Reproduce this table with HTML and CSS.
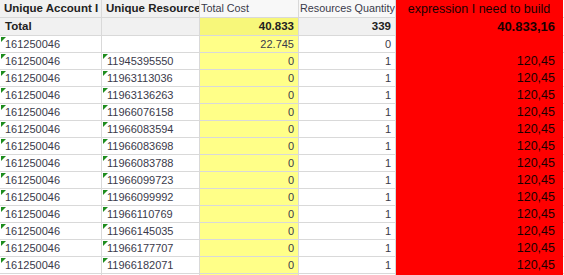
FILE: index.html
```html
<!DOCTYPE html>
<html lang="en">
<head>
    <meta charset="UTF-8">
    <title>Straight Table</title>
    <link rel="stylesheet" href="styles.css">
</head>
<body>
    <div class="sheet">
        <!-- header -->
        <div class="cell head bold">Unique Account I</div>
        <div class="cell head bold">Unique Resource</div>
        <div class="cell head light">Total Cost</div>
        <div class="cell head light">Resources Quantity</div>
        <div class="cell expr expr-head">expression I need to build</div>
        <div class="cell edge"></div>

        <!-- totals -->
        <div class="cell total bold">Total</div>
        <div class="cell total"></div>
        <div class="cell cost total-cost bold num">40.833</div>
        <div class="cell total bold num">339</div>
        <div class="cell expr bold num">40.833,16</div>
        <div class="cell edge"></div>

        <div class="cell flag">161250046</div>
        <div class="cell"></div>
        <div class="cell cost num">22.745</div>
        <div class="cell num">0</div>
        <div class="cell expr num"></div>
        <div class="cell edge"></div>

        <div class="cell flag">161250046</div><div class="cell flag">11945395550</div><div class="cell cost num">0</div><div class="cell num">1</div><div class="cell expr num">120,45</div><div class="cell edge"></div>
        <div class="cell flag">161250046</div><div class="cell flag">11963113036</div><div class="cell cost num">0</div><div class="cell num">1</div><div class="cell expr num">120,45</div><div class="cell edge"></div>
        <div class="cell flag">161250046</div><div class="cell flag">11963136263</div><div class="cell cost num">0</div><div class="cell num">1</div><div class="cell expr num">120,45</div><div class="cell edge"></div>
        <div class="cell flag">161250046</div><div class="cell flag">11966076158</div><div class="cell cost num">0</div><div class="cell num">1</div><div class="cell expr num">120,45</div><div class="cell edge"></div>
        <div class="cell flag">161250046</div><div class="cell flag">11966083594</div><div class="cell cost num">0</div><div class="cell num">1</div><div class="cell expr num">120,45</div><div class="cell edge"></div>
        <div class="cell flag">161250046</div><div class="cell flag">11966083698</div><div class="cell cost num">0</div><div class="cell num">1</div><div class="cell expr num">120,45</div><div class="cell edge"></div>
        <div class="cell flag">161250046</div><div class="cell flag">11966083788</div><div class="cell cost num">0</div><div class="cell num">1</div><div class="cell expr num">120,45</div><div class="cell edge"></div>
        <div class="cell flag">161250046</div><div class="cell flag">11966099723</div><div class="cell cost num">0</div><div class="cell num">1</div><div class="cell expr num">120,45</div><div class="cell edge"></div>
        <div class="cell flag">161250046</div><div class="cell flag">11966099992</div><div class="cell cost num">0</div><div class="cell num">1</div><div class="cell expr num">120,45</div><div class="cell edge"></div>
        <div class="cell flag">161250046</div><div class="cell flag">11966110769</div><div class="cell cost num">0</div><div class="cell num">1</div><div class="cell expr num">120,45</div><div class="cell edge"></div>
        <div class="cell flag">161250046</div><div class="cell flag">11966145035</div><div class="cell cost num">0</div><div class="cell num">1</div><div class="cell expr num">120,45</div><div class="cell edge"></div>
        <div class="cell flag">161250046</div><div class="cell flag">11966177707</div><div class="cell cost num">0</div><div class="cell num">1</div><div class="cell expr num">120,45</div><div class="cell edge"></div>
        <div class="cell flag">161250046</div><div class="cell flag">11966182071</div><div class="cell cost num">0</div><div class="cell num">1</div><div class="cell expr num">120,45</div><div class="cell edge"></div>
        <!-- next row, cut off by the window -->
        <div class="cell flag stub"></div><div class="cell flag stub"></div><div class="cell cost"></div><div class="cell"></div><div class="cell expr"></div><div class="cell edge"></div>
    </div>
</body>
</html>
```

FILE: styles.css
```css
body {
    margin: 0;
    background-color: #fff;
    font-family: 'Liberation Sans', Arial, sans-serif;
    font-size: 11px;
    color: #3a3a4a;
    overflow: hidden;
}
.sheet {
    display: grid;
    grid-template-columns: 102px 98px 99px 97px 167px 1fr;
    grid-template-rows: 18px 18px;
    grid-auto-rows: 17px;
    width: 564px;
}
.cell {
    position: relative;
    box-sizing: border-box;
    border-right: 1px solid #d9d9d9;
    border-bottom: 1px solid #d9d9d9;
    padding: 0 4px 0 5px;
    line-height: 16px;
    white-space: nowrap;
    overflow: hidden;
}
.head {
    background-color: #f1f1f1;
    line-height: 17px;
    padding: 0 0 0 4px;
    font-size: 11.5px;
}
.head.light {
    background-color: #f8f8f8;
    font-weight: normal;
    font-size: 10.8px;
    color: #3a3a4a;
    padding-left: 1px;
}
.total {
    background-color: #f1f1f1;
    line-height: 17px;
    font-size: 11.5px;
}
.bold {
    font-weight: bold;
    color: #222;
}
.num {
    text-align: right;
}
.cost {
    background-color: #ffff88;
}
.total-cost {
    background-color: #f7f77a;
    line-height: 17px;
    font-size: 11.5px;
}
.expr {
    background-color: #ff0000;
    border-color: #ff0000;
    color: #1a0000;
    font-size: 12.5px;
    padding-right: 7px;
}
.expr.bold {
    font-size: 13px;
    color: #1a0000;
    line-height: 17px;
}
.expr-head {
    text-align: center;
    line-height: 18px;
    padding: 0;
}
.edge {
    border-right: none;
    padding: 0;
}
.flag::before {
    content: "";
    position: absolute;
    left: 1px;
    top: 1px;
    border-top: 5px solid #1e8c1e;
    border-right: 5px solid transparent;
}
.flag:empty::before {
    display: none;
}
.flag.stub::before {
    display: block;
}
```
